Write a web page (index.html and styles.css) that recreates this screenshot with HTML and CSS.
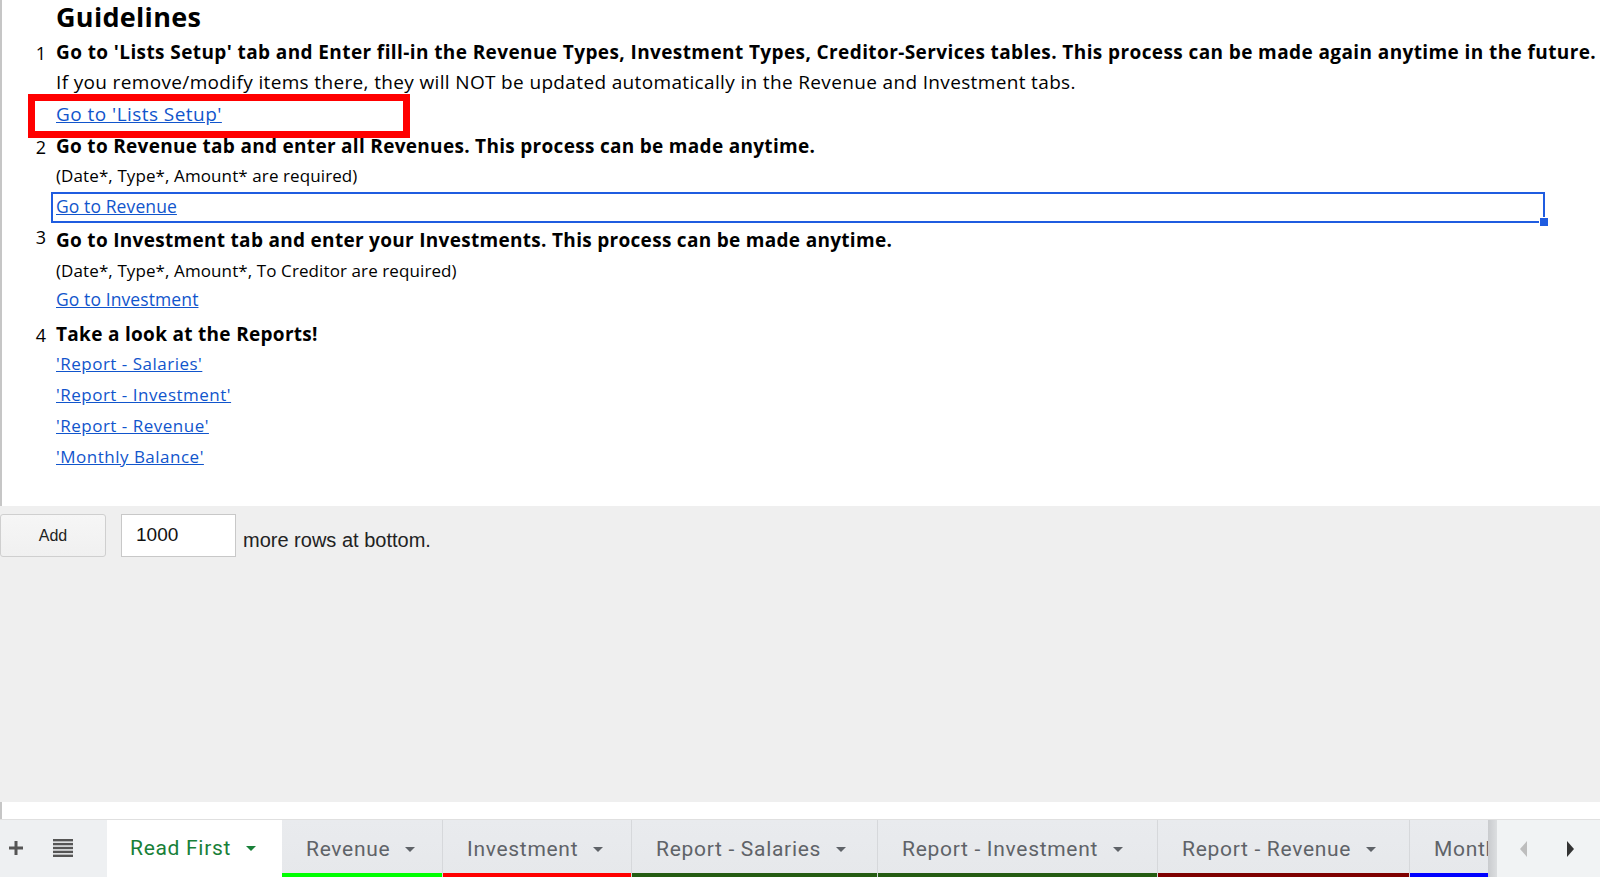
FILE: index.html
```html
<!DOCTYPE html>
<html>
<head>
<meta charset="utf-8">
<title>Read First</title>
<link rel="stylesheet" href="styles.css">
</head>
<body>
<div class="sheet">
  <div class="row h37"><div class="num"></div><div class="cell title">Guidelines</div></div>
  <div class="row h33"><div class="num">1</div><div class="cell b b-long">Go to 'Lists Setup' tab and Enter fill-in the Revenue Types, Investment Types, Creditor-Services tables. This process can be made again anytime in the future.</div></div>
  <div class="row h30"><div class="num"></div><div class="cell">If you remove/modify items there, they will NOT be updated automatically in the Revenue and Investment tabs.</div></div>
  <div class="row h32"><div class="num"></div><div class="cell"><a class="lnk lk-lists" href="#">Go to 'Lists Setup'</a></div><div class="redbox"></div></div>
  <div class="row h32"><div class="num">2</div><div class="cell b">Go to Revenue tab and enter all Revenues. This process can be made anytime.</div></div>
  <div class="row h28"><div class="num"></div><div class="cell sm">(Date*, Type*, Amount* are required)</div></div>
  <div class="row h31"><div class="num"></div><div class="cell sel"><a class="lnk lk-go" href="#">Go to Revenue</a><span class="handle"></span></div></div>
  <div class="row h35"><div class="num n3">3</div><div class="cell b">Go to Investment tab and enter your Investments. This process can be made anytime.</div></div>
  <div class="row h29"><div class="num"></div><div class="cell sm">(Date*, Type*, Amount*, To Creditor are required)</div></div>
  <div class="row h30"><div class="num"></div><div class="cell"><a class="lnk lk-go" href="#">Go to Investment</a></div></div>
  <div class="row h35"><div class="num">4</div><div class="cell b">Take a look at the Reports!</div></div>
  <div class="row h28"><div class="num"></div><div class="cell rep"><a class="lnk" href="#">'Report - Salaries'</a></div></div>
  <div class="row h31"><div class="num"></div><div class="cell rep"><a class="lnk" href="#">'Report - Investment'</a></div></div>
  <div class="row h31"><div class="num"></div><div class="cell rep"><a class="lnk" href="#">'Report - Revenue'</a></div></div>
  <div class="row h31"><div class="num"></div><div class="cell rep"><a class="lnk" href="#">'Monthly Balance'</a></div></div>
</div>

<div class="addbar">
  <button class="addbtn">Add</button>
  <div class="addinput">1000</div>
  <span class="addtext">more rows at bottom.</span>
</div>

<div class="fill"></div>
<div class="strip"></div>

<div class="tabbar">
  <div class="tools">
    <svg class="ico" width="18" height="18" viewBox="0 0 18 18"><path d="M9 2v14M2 9h14" stroke="#555" stroke-width="3" fill="none"/></svg>
    <svg class="ico" width="20" height="18" viewBox="0 0 20 18"><g fill="#555"><rect x="0" y="0" width="20" height="2.4"/><rect x="0" y="3.9" width="20" height="2.4"/><rect x="0" y="7.8" width="20" height="2.4"/><rect x="0" y="11.7" width="20" height="2.4"/><rect x="0" y="15.6" width="20" height="2.4"/></g></svg>
  </div>
  <div class="tab active"><span>Read First</span><i class="caret"></i></div>
  <div class="tab c-green"><span>Revenue</span><i class="caret"></i></div>
  <div class="tab c-red"><span>Investment</span><i class="caret"></i></div>
  <div class="tab c-dkgreen w-sal"><span>Report - Salaries</span><i class="caret"></i></div>
  <div class="tab c-dkgreen w-inv"><span>Report - Investment</span><i class="caret"></i></div>
  <div class="tab c-dkred w-rev"><span>Report - Revenue</span><i class="caret"></i></div>
  <div class="tab c-blue clip"><span>Monthly Balance</span></div>
  <div class="shade"></div>
  <div class="arrows">
    <svg width="10" height="18" viewBox="0 0 10 18"><path d="M8 1v16L1 9z" fill="#bdbdbd"/></svg>
    <svg width="10" height="18" viewBox="0 0 10 18"><path d="M2 1v16l7-8z" fill="#333"/></svg>
  </div>
</div>
</body>
</html>
```

FILE: styles.css
```css
html, body {
  margin: 0;
  padding: 0;
}
body {
  width: 1600px;
  height: 877px;
  overflow: hidden;
  display: flex;
  flex-direction: column;
  background: #efefef;
  font-family: "Open Sans", "Noto Sans", sans-serif;
  color: #000;
}
.sheet {
  height: 506px;
  flex: none;
  background: #fff;
  border-left: 2px solid #c6c6c6;
  box-sizing: border-box;
}
.row {
  display: grid;
  grid-template-columns: 49px 1fr;
  align-items: end;
  position: relative;
}
.h28 { height: 28px; }
.h29 { height: 29px; }
.h30 { height: 30px; }
.h31 { height: 31px; }
.h32 { height: 32px; }
.h33 { height: 33px; }
.h35 { height: 35px; }
.h37 { height: 37px; }

.num {
  text-align: right;
  padding-right: 5px;
  font-size: 18px;
  line-height: 1;
  padding-bottom: 8px;
}
.num.n3 { padding-bottom: 12px; }
.cell {
  padding-left: 5px;
  font-size: 19px;
  line-height: 1;
  padding-bottom: 8px;
  white-space: nowrap;
  letter-spacing: 0.35px;
}
.cell.title {
  font-size: 27px;
  font-weight: 700;
  padding-bottom: 7px;
  letter-spacing: 0.3px;
}
.cell.b {
  font-weight: 700;
  font-size: 19px;
  letter-spacing: 0.3px;
}
.cell.b-long {
  letter-spacing: 0.4px;
}
.cell.sm {
  font-size: 17px;
  letter-spacing: 0.1px;
}
.cell.rep {
  font-size: 17px;
  letter-spacing: 0.5px;
}
.lnk {
  color: #1155cc;
  text-decoration: underline;
}
.lk-lists {
  letter-spacing: 0.45px;
}
.lk-go {
  font-size: 17.5px;
  letter-spacing: 0.1px;
}
.cell.sel {
  align-self: stretch;
  width: 1494px;
  box-sizing: border-box;
  border: 2px solid #1f5ce0;
  padding-left: 3px;
  padding-bottom: 6px;
  display: flex;
  align-items: flex-end;
  position: relative;
}
.handle {
  position: absolute;
  right: -6px;
  bottom: -6px;
  width: 8px;
  height: 8px;
  background: #1f5ce0;
  border: 1px solid #fff;
}
.redbox {
  position: absolute;
  left: 26px;
  top: -6px;
  width: 382px;
  height: 44px;
  box-sizing: border-box;
  border: 7px solid #ff0000;
  pointer-events: none;
}

.addbar {
  flex: none;
  height: 43px;
  margin-top: 8px;
  display: flex;
  align-items: stretch;
  font-family: "Liberation Sans", Arial, sans-serif;
}
.addbtn {
  width: 106px;
  margin: 0;
  background: linear-gradient(#f6f6f6, #f0f0f0);
  border: 1px solid #cfcfcf;
  border-radius: 3px;
  font-family: "Liberation Sans", Arial, sans-serif;
  font-size: 16px;
  color: #222;
  padding: 0;
}
.addinput {
  width: 115px;
  margin-left: 15px;
  box-sizing: border-box;
  background: #fff;
  border: 1px solid #c8c8c8;
  font-size: 19px;
  color: #111;
  padding-left: 14px;
  display: flex;
  align-items: center;
  padding-bottom: 1px;
}
.addtext {
  margin-left: 7px;
  font-size: 20px;
  color: #222;
  align-self: flex-end;
  padding-bottom: 5px;
}

.fill {
  flex: 1;
}
.strip {
  flex: none;
  height: 17px;
  background: #fff;
  border-left: 2px solid #c6c6c6;
  box-sizing: border-box;
}
.tabbar {
  flex: none;
  height: 58px;
  display: flex;
  background: #eef0f2;
  border-top: 1px solid #e0e0e0;
  box-sizing: border-box;
  font-family: Roboto, "Noto Sans", sans-serif;
  font-size: 21px;
  color: #5f6368;
  overflow: hidden;
}
.tools {
  width: 107px;
  flex: none;
  display: flex;
  align-items: center;
  padding-left: 7px;
  gap: 28px;
  box-sizing: border-box;
  padding-bottom: 1px;
}
.tab {
  flex: none;
  display: flex;
  align-items: center;
  padding: 0 24px 0 24px;
  gap: 15px;
  box-sizing: border-box;
  border-right: 1px solid #d6d8db;
  background: linear-gradient(#e9ebee, #e6e8eb);
  white-space: nowrap;
  letter-spacing: 0.7px;
}
.tab.active {
  background: #fff;
  color: #188038;
  width: 175px;
  padding-left: 23px;
  margin-top: -1px;
  border-right: none;
}
.caret {
  flex: none;
  width: 0;
  height: 0;
  border-left: 5px solid transparent;
  border-right: 5px solid transparent;
  border-top: 5px solid currentColor;
  margin-top: 1px;
}
.c-green { box-shadow: inset 0 -4px 0 #00ff00; width: 161px; }
.c-red { box-shadow: inset 0 -4px 0 #ff0000; width: 189px; }
.c-dkgreen { box-shadow: inset 0 -4px 0 #245c12; }
.c-dkred { box-shadow: inset 0 -4px 0 #7f0000; }
.c-blue { box-shadow: inset 0 -4px 0 #0000ff; }
.w-sal { width: 246px; }
.w-inv { width: 280px; }
.w-rev { width: 252px; }
.tab.clip {
  width: 78px;
  overflow: hidden;
  border-right: none;
  padding-left: 24px;
  padding-right: 0;
}
.shade {
  flex: none;
  width: 9px;
  background: linear-gradient(to right, #c9cbce, #dcdee0);
}
.arrows {
  flex: 1;
  display: flex;
  align-items: center;
  padding-left: 22px;
  gap: 36px;
  background: #f1f3f4;
}
```
